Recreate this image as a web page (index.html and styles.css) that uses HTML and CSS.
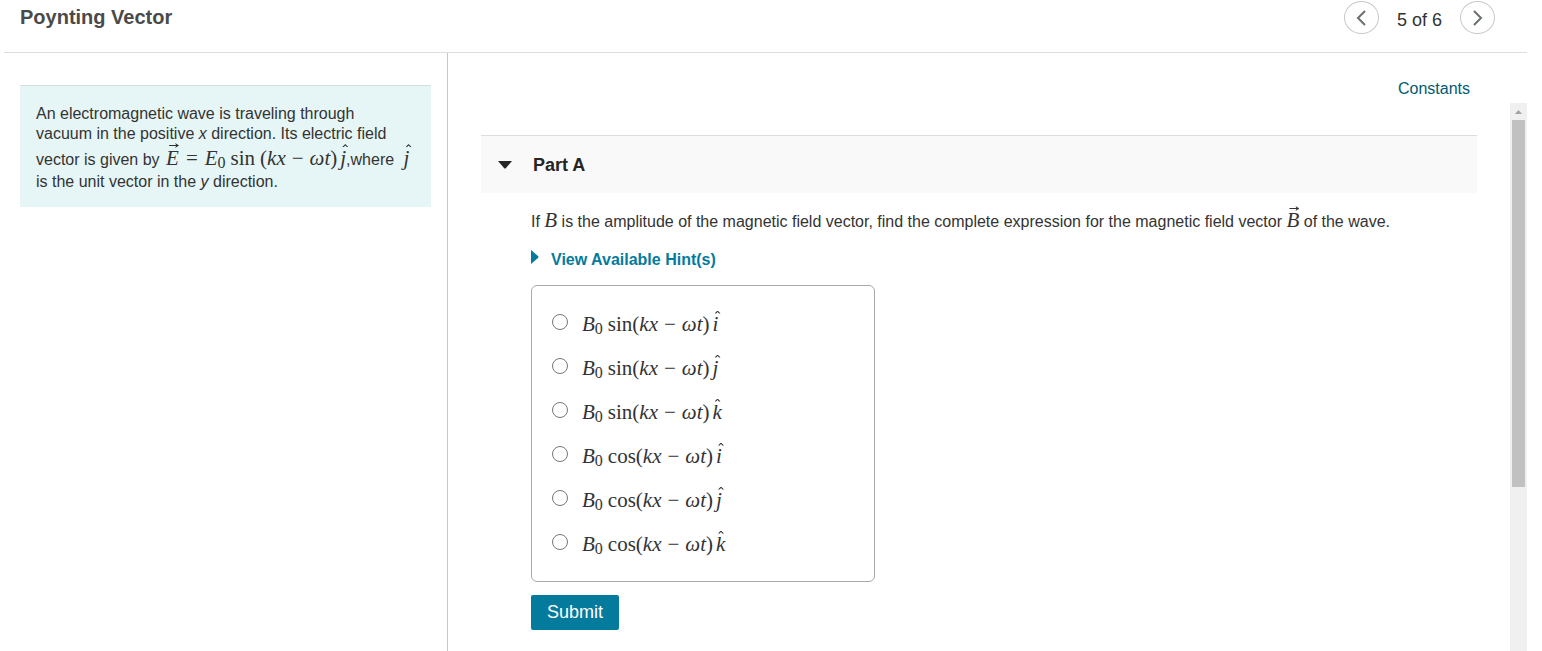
FILE: index.html
```html
<!DOCTYPE html>
<html lang="en">
<head>
    <title>Poynting Vector</title>
    <meta charset="UTF-8">
    <meta name="viewport" content="width=device-width, initial-scale=1.0">
    <link rel="stylesheet" href="styles.css">
</head>
<body>
    <header class="top-bar">
        <h1>Poynting Vector</h1>
        <nav class="pager">
            <button type="button" class="pager-btn" aria-label="Previous item">
                <svg width="10" height="16" viewBox="0 0 10 16"><path d="M9 1 L2 8 L9 15" /></svg>
            </button>
            <span class="pager-text">5 of 6</span>
            <button type="button" class="pager-btn" aria-label="Next item">
                <svg width="10" height="16" viewBox="0 0 10 16"><path d="M1 1 L8 8 L1 15" /></svg>
            </button>
        </nav>
    </header>

    <div class="content">
        <aside class="intro">
            <p class="intro-box">
                An electromagnetic wave is traveling through vacuum in the positive <i>x</i> direction. Its electric field vector is given by <span class="math"><i class="vec">E</i><span class="rel">=</span><i>E</i><sub>0</sub><span class="fn">sin</span><span class="paren">(</span><i>kx</i><span class="op">−</span><i>ωt</i>)<i class="hat">j</i></span>,where <span class="math"><i class="hat">j</i></span> is the unit vector in the <i>y</i> direction.
            </p>
        </aside>

        <main class="work">
            <div class="tools"><a href="#constants">Constants</a></div>
            <div class="scroll-area">
                <section class="part">
                    <h2 class="part-header">
                        <button type="button" class="part-toggle" aria-expanded="true">
                            <svg width="14" height="8" viewBox="0 0 14 8"><path d="M0 0 H14 L8 7 Q7 8 6 7 Z" /></svg>
                            Part A
                        </button>
                    </h2>
                    <form class="part-body" id="answerForm">
                        <p class="question">If <span class="math"><i>B</i></span> is the amplitude of the magnetic field vector, find the complete expression for the magnetic field vector <span class="math"><i class="vec">B</i></span> of the wave.</p>
                        <button type="button" class="hint-btn">
                            <svg width="8" height="14" viewBox="0 0 8 14"><path d="M0 0 L7 6 Q8 7 7 8 L0 14 Z" /></svg>
                            View Available Hint(s)
                        </button>
                        <div class="choices" role="radiogroup" aria-label="Answer choices">
                            <label class="choice">
                                <input type="radio" name="answer" value="1">
                                <span class="math"><i>B</i><sub>0</sub><span class="fn">sin</span>(<i>kx</i><span class="op">−</span><i>ωt</i>)<i class="hat">i</i></span>
                            </label>
                            <label class="choice">
                                <input type="radio" name="answer" value="2">
                                <span class="math"><i>B</i><sub>0</sub><span class="fn">sin</span>(<i>kx</i><span class="op">−</span><i>ωt</i>)<i class="hat">j</i></span>
                            </label>
                            <label class="choice">
                                <input type="radio" name="answer" value="3">
                                <span class="math"><i>B</i><sub>0</sub><span class="fn">sin</span>(<i>kx</i><span class="op">−</span><i>ωt</i>)<i class="hat">k</i></span>
                            </label>
                            <label class="choice">
                                <input type="radio" name="answer" value="4">
                                <span class="math"><i>B</i><sub>0</sub><span class="fn">cos</span>(<i>kx</i><span class="op">−</span><i>ωt</i>)<i class="hat">i</i></span>
                            </label>
                            <label class="choice">
                                <input type="radio" name="answer" value="5">
                                <span class="math"><i>B</i><sub>0</sub><span class="fn">cos</span>(<i>kx</i><span class="op">−</span><i>ωt</i>)<i class="hat">j</i></span>
                            </label>
                            <label class="choice">
                                <input type="radio" name="answer" value="6">
                                <span class="math"><i>B</i><sub>0</sub><span class="fn">cos</span>(<i>kx</i><span class="op">−</span><i>ωt</i>)<i class="hat">k</i></span>
                            </label>
                        </div>
                        <button type="submit" class="submit-btn">Submit</button>
                    </form>
                </section>
                <div class="scrollbar">
                    <svg class="scroll-up" width="17" height="17" viewBox="0 0 17 17"><path d="M5 11 L8.5 7 L12 11 Z" /></svg>
                    <div class="scroll-thumb"></div>
                </div>
            </div>
        </main>
    </div>
</body>
</html>
```
FILE: styles.css
```css
:root {
    --teal: #047a9c;
    --teal-dark: #005a70;
    --text: #333;
    --line: #ddd;
}

* {
    box-sizing: border-box;
}

body {
    margin: 0;
    padding: 0 15px 0 4px;
    min-height: 100vh;
    display: flex;
    flex-direction: column;
    background: #fff;
    color: var(--text);
    font-family: "Liberation Sans", Arial, sans-serif;
    font-size: 16px;
    line-height: 20px;
}

button {
    font-family: inherit;
    border: none;
    background: none;
    padding: 0;
    cursor: pointer;
}

.top-bar {
    display: flex;
    justify-content: space-between;
    align-items: flex-start;
    height: 53px;
    padding: 0 32px 0 16px;
    border-bottom: 1px solid var(--line);
}

h1 {
    margin: 5px 0 0;
    font-size: 20px;
    line-height: 24px;
    color: #4a4a4a;
}

.pager {
    display: flex;
    align-items: center;
    gap: 18px;
    padding-top: 1px;
}

.pager-btn {
    display: flex;
    align-items: center;
    justify-content: center;
    width: 35px;
    height: 33px;
    border: 1px solid #c7c7c7;
    border-radius: 50%;
}

.pager-btn path {
    fill: none;
    stroke: #6a7070;
    stroke-width: 2;
}

.pager-text {
    padding-top: 4px;
    font-size: 18px;
}

.content {
    flex: 1;
    display: flex;
}

.intro {
    flex: 0 0 444px;
    padding: 32px 16px;
    border-right: 1px solid #c0c8d4;
}

.intro-box {
    margin: 0;
    padding: 18px 17px 15px 16px;
    background: #e6f6f7;
    border-top: 1px solid #d5dfe0;
}

.work {
    flex: 1;
    display: flex;
    flex-direction: column;
}

.tools {
    height: 50px;
    padding: 26px 57px 0 0;
    text-align: right;
}

.tools a {
    color: var(--teal-dark);
    text-decoration: none;
}

.scroll-area {
    flex: 1;
    display: flex;
}

.part {
    flex: 1;
    padding: 32px 33px 0;
}

.part-header {
    margin: 0;
    padding: 19px 17px 18px;
    background: #f9f9f9;
    border-top: 1px solid var(--line);
    line-height: 20px;
}

.part-toggle {
    display: flex;
    align-items: center;
    gap: 21px;
    color: #252525;
    font-size: 18px;
    font-weight: bold;
    line-height: 20px;
}

.part-toggle path {
    fill: #252525;
}

.part-body {
    padding: 14px 0 20px 50px;
}

.question {
    margin: 0 0 14px;
    line-height: 28px;
}

.hint-btn {
    display: flex;
    align-items: flex-start;
    gap: 12px;
    color: var(--teal);
    font-size: 16px;
    font-weight: bold;
    line-height: 20px;
}

.hint-btn path {
    fill: var(--teal);
}

.choices {
    width: 344px;
    margin: 15px 0 13px;
    padding: 14px 20px 17px;
    border: 1px solid #aaa;
    border-radius: 6px;
}

.choice {
    display: flex;
    align-items: center;
    gap: 14px;
    height: 44px;
    cursor: pointer;
}

.choice input {
    appearance: none;
    width: 16px;
    height: 16px;
    margin: 0;
    border: 1px solid #767676;
    border-radius: 50%;
    background: #fff;
}

.choice input:checked {
    border: 5px solid var(--teal);
}

.choice .math {
    padding-top: 3px;
}

.submit-btn {
    height: 35px;
    padding: 0 16px;
    border-radius: 2px;
    background: var(--teal);
    color: #fff;
    font-size: 18px;
}

/* Formulas */
.math {
    font-family: "Liberation Serif", "Times New Roman", serif;
    font-size: 21px;
    line-height: 26px;
    white-space: nowrap;
}

.intro-box .math {
    margin-left: 2px;
    line-height: 28px;
}

.math sub {
    font-size: 16px;
    line-height: 0;
    vertical-align: -3px;
}

.fn {
    margin-left: 5px;
}

.op {
    margin: 0 6px;
}

.rel {
    margin: 0 7px;
}

.paren {
    margin-left: 5px;
}

.vec,
.hat {
    position: relative;
    display: inline-block;
}

.hat {
    margin-left: 3px;
}

/* accents drawn over the letter */
.vec::before,
.hat::before {
    content: "";
    position: absolute;
    background: currentColor;
}

.vec::before {
    top: -1px;
    left: 3px;
    width: 10px;
    height: 5px;
    clip-path: polygon(0 40%, 70% 40%, 60% 0, 100% 50%, 60% 100%, 70% 60%, 0 60%);
}

.hat::before {
    top: 0;
    left: 2px;
    width: 6px;
    height: 3px;
    clip-path: polygon(0 100%, 50% 0, 100% 100%, 75% 100%, 50% 50%, 25% 100%);
}

/* Scrollbar */
.scrollbar {
    width: 17px;
    padding: 0 2px;
    background: #f0f0f0;
}

.scroll-up {
    display: block;
    margin: 0 -2px;
}

.scroll-up path {
    fill: #a3a3a3;
}

.scroll-thumb {
    height: 67%;
    background: #c1c1c1;
}
```
